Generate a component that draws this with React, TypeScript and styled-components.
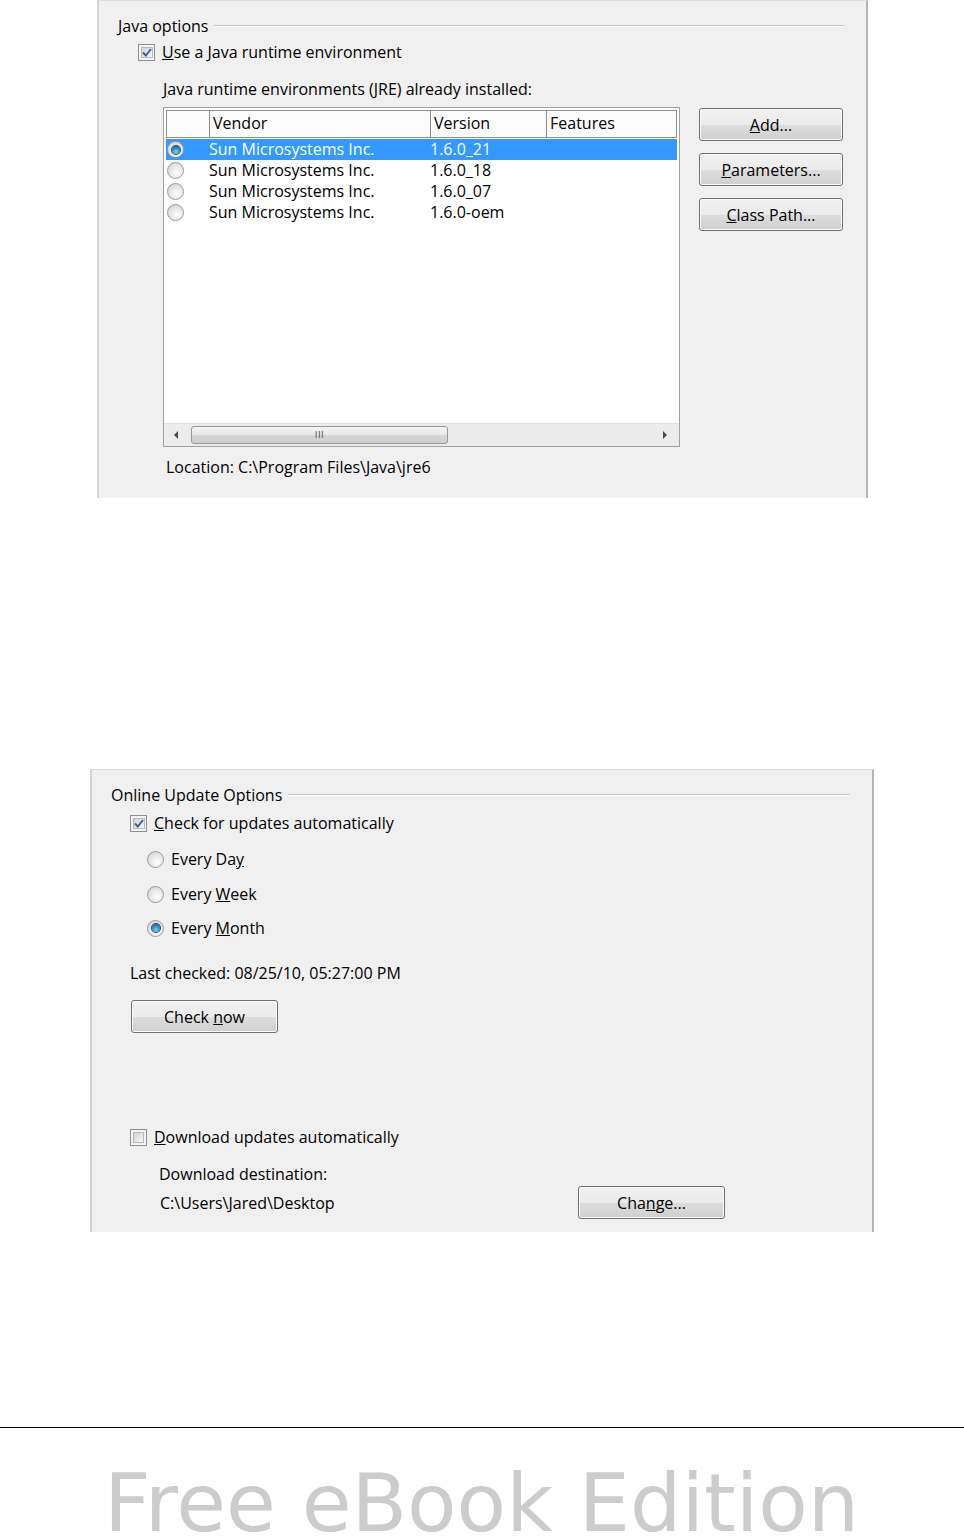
import styled, { createGlobalStyle } from "styled-components";

const GlobalStyle = createGlobalStyle`
  html, body {
    margin: 0;
    padding: 0;
    background: #ffffff;
  }
  body {
    font-family: "Open Sans", "Noto Sans", sans-serif;
    font-size: 16px;
    color: #000;
  }
`;

const Page = styled.div`
  width: 964px;
  height: 1539px;
  overflow: hidden;
  display: flex;
  flex-direction: column;
`;

const Panel = styled.section<{ $left: number; $width: number; $height: number; $top: number }>`
  box-sizing: border-box;
  flex-shrink: 0;
  margin-left: ${({ $left }) => $left}px;
  margin-top: ${({ $top }) => $top}px;
  width: ${({ $width }) => $width}px;
  height: ${({ $height }) => $height}px;
  background: #f0f0f0;
  border-top: 1px solid #dcdcdc;
  border-left: 2px solid #d4d4d4;
  border-right: 2px solid #b4b4b4;
  padding: 15px 22px 0 19px;
  display: flex;
  flex-direction: column;
`;

const GroupHeader = styled.div`
  display: flex;
  align-items: center;
  gap: 6px;
  height: 20px;
  line-height: 20px;
`;

const Rule = styled.div`
  flex: 1;
  border-top: 1px solid #c6c6c6;
  border-bottom: 1px solid #ffffff;
`;

const Row = styled.div<{ $indent: number; $top: number }>`
  display: flex;
  align-items: center;
  gap: 7px;
  height: 20px;
  line-height: 20px;
  flex-shrink: 0;
  margin-left: ${({ $indent }) => $indent}px;
  margin-top: ${({ $top }) => $top}px;
  white-space: nowrap;
`;

const Box = styled.span`
  box-sizing: border-box;
  width: 17px;
  height: 17px;
  border: 1px solid #8f8f8f;
  background: #f4f4f4;
  padding: 2px;
  display: inline-flex;
  flex-shrink: 0;
`;

const BoxInner = styled.span`
  flex: 1;
  border: 1px solid #b8b8b8;
  background: linear-gradient(135deg, #d2d2d2, #f8f8f8);
  display: flex;
  align-items: center;
  justify-content: center;
`;

const Circle = styled.span<{ $on?: boolean }>`
  box-sizing: border-box;
  width: 17px;
  height: 17px;
  border-radius: 50%;
  border: 1px solid #9a9a9a;
  background: radial-gradient(circle at 60% 65%, #ffffff 0%, #e4e4e4 55%, #c8c8c8 100%);
  display: inline-flex;
  align-items: center;
  justify-content: center;
  flex-shrink: 0;

  &::after {
    content: "";
    display: ${({ $on }) => ($on ? "block" : "none")};
    width: 8px;
    height: 8px;
    border-radius: 50%;
    background: radial-gradient(circle at 50% 70%, #7fd3f5 0%, #2b86b8 55%, #0f3e5e 100%);
    box-shadow: 0 0 0 1px #1e4d6d;
  }
`;

const Checkbox = ({ checked }: { checked?: boolean }) => (
  <Box>
    <BoxInner>
      {checked && (
        <svg width="10" height="9" viewBox="0 0 10 9">
          <path d="M1 4.5 L3.8 7.5 L9 1" fill="none" stroke="#3e5c94" strokeWidth="1.9" />
        </svg>
      )}
    </BoxInner>
  </Box>
);

const Button = styled.div<{ $width: number }>`
  box-sizing: border-box;
  width: ${({ $width }) => $width}px;
  height: 33px;
  border: 1px solid #707070;
  border-radius: 3px;
  box-shadow: inset 0 0 0 1px #fcfcfc;
  background: linear-gradient(#f2f2f2 0%, #ebebeb 50%, #dddddd 51%, #cfcfcf 100%);
  display: flex;
  align-items: center;
  justify-content: center;
  flex-shrink: 0;
`;

const Content = styled.div`
  display: flex;
  margin-top: 8px;
  margin-left: 45px;
  gap: 19px;
`;

const ListBox = styled.div`
  box-sizing: border-box;
  width: 517px;
  height: 340px;
  border: 1px solid #a0a0a0;
  background: #fff;
  padding: 2px;
  display: flex;
  flex-direction: column;
`;

const cols = "42px 221px 116px 1fr";

const HeaderRow = styled.div`
  box-sizing: border-box;
  display: grid;
  grid-template-columns: ${cols};
  height: 28px;
  border: 1px solid #8e8e8e;
  background: #fcfcfc;
`;

const HeaderCell = styled.div`
  border-left: 1px solid #8e8e8e;
  padding-left: 3px;
  line-height: 25px;
  &:first-child {
    border-left: none;
  }
`;

const Rows = styled.div`
  flex: 1;
  padding-top: 1px;
`;

const ListRow = styled.div<{ $selected?: boolean }>`
  display: grid;
  grid-template-columns: ${cols};
  height: 21px;
  line-height: 21px;
  background: ${({ $selected }) => ($selected ? "#3399ff" : "transparent")};
  color: ${({ $selected }) => ($selected ? "#fff" : "#000")};
  white-space: nowrap;
`;

const RadioCell = styled.div`
  display: flex;
  align-items: center;
  padding-left: 1px;
`;

const Cell = styled.div`
  padding-left: 1px;
`;

const ScrollBar = styled.div`
  height: 22px;
  margin: 0 -2px -2px;
  background: #ececec;
  border-top: 1px solid #e0e0e0;
  display: flex;
  align-items: center;
  padding: 0 12px 0 10px;
  gap: 13px;
`;

const Arrow = styled.span<{ $dir: "left" | "right" }>`
  width: 0;
  height: 0;
  border-top: 4px solid transparent;
  border-bottom: 4px solid transparent;
  ${({ $dir }) => ($dir === "left" ? "border-right: 4px solid #4a4a4a;" : "border-left: 4px solid #4a4a4a;")}
`;

const Thumb = styled.div`
  box-sizing: border-box;
  width: 257px;
  height: 18px;
  border: 1px solid #979797;
  border-radius: 3px;
  background: linear-gradient(#f3f3f3 0%, #e8e8e8 50%, #d6d6d6 51%, #cfcfcf 100%);
  display: flex;
  align-items: center;
  justify-content: center;
  font-size: 9px;
  letter-spacing: 0.5px;
  color: #555;
  font-family: "DejaVu Sans", sans-serif;
`;

const Spacer = styled.div`
  flex: 1;
`;

const ButtonColumn = styled.div`
  display: flex;
  flex-direction: column;
  gap: 12px;
  margin-top: 1px;
`;

const Footer = styled.footer`
  flex-shrink: 0;
  margin-top: 195px;
  border-top: 1px solid #000;
  display: flex;
  flex-direction: column;
`;

const Watermark = styled.div`
  margin-top: 35px;
  margin-left: 104px;
  font-family: "DejaVu Sans", sans-serif;
  font-size: 81px;
  line-height: 1;
  color: #cccccc;
  white-space: nowrap;
`;

const DestRow = styled.div`
  display: flex;
  align-items: center;
  justify-content: space-between;
  flex-shrink: 0;
  margin-left: 49px;
  width: 565px;
  margin-top: 2px;
`;

const jres = [
  { v: "1.6.0_21", selected: true },
  { v: "1.6.0_18" },
  { v: "1.6.0_07" },
  { v: "1.6.0-oem" },
];

export default function App() {
  return (
    <Page>
      <GlobalStyle />
      <Panel $left={97} $top={0} $width={771} $height={498}>
        <GroupHeader>
          Java options
          <Rule />
        </GroupHeader>
        <Row $indent={20} $top={6}>
          <Checkbox checked />
          <span>
            <u>U</u>se a Java runtime environment
          </span>
        </Row>
        <Row $indent={45} $top={17}>
          <span>
            <u>J</u>ava runtime environments (JRE) already installed:
          </span>
        </Row>
        <Content>
          <ListBox>
            <HeaderRow>
              <HeaderCell />
              <HeaderCell>Vendor</HeaderCell>
              <HeaderCell>Version</HeaderCell>
              <HeaderCell>Features</HeaderCell>
            </HeaderRow>
            <Rows>
              {jres.map((j) => (
                <ListRow key={j.v} $selected={j.selected}>
                  <RadioCell>
                    <Circle $on={j.selected} />
                  </RadioCell>
                  <Cell>Sun Microsystems Inc.</Cell>
                  <Cell>{j.v}</Cell>
                  <Cell />
                </ListRow>
              ))}
            </Rows>
            <ScrollBar>
              <Arrow $dir="left" />
              <Thumb>III</Thumb>
              <Spacer />
              <Arrow $dir="right" />
            </ScrollBar>
          </ListBox>
          <ButtonColumn>
            <Button $width={144}>
              <span>
                <u>A</u>dd...
              </span>
            </Button>
            <Button $width={144}>
              <span>
                <u>P</u>arameters...
              </span>
            </Button>
            <Button $width={144}>
              <span>
                <u>C</u>lass Path...
              </span>
            </Button>
          </ButtonColumn>
        </Content>
        <Row $indent={48} $top={10}>
          Location: C:\Program Files\Java\jre6
        </Row>
      </Panel>

      <Panel $left={90} $top={271} $width={784} $height={463}>
        <GroupHeader>
          Online Update Options
          <Rule />
        </GroupHeader>
        <Row $indent={19} $top={8}>
          <Checkbox checked />
          <span>
            <u>C</u>heck for updates automatically
          </span>
        </Row>
        <Row $indent={36} $top={16}>
          <Circle />
          <span>
            Every Da<u>y</u>
          </span>
        </Row>
        <Row $indent={36} $top={15}>
          <Circle />
          <span>
            Every <u>W</u>eek
          </span>
        </Row>
        <Row $indent={36} $top={14}>
          <Circle $on />
          <span>
            Every <u>M</u>onth
          </span>
        </Row>
        <Row $indent={19} $top={25}>
          Last checked: 08/25/10, 05:27:00 PM
        </Row>
        <Row $indent={20} $top={17} style={{ height: 33 }}>
          <Button $width={147}>
            <span>
              Check <u>n</u>ow
            </span>
          </Button>
        </Row>
        <Row $indent={19} $top={94}>
          <Checkbox />
          <span>
            <u>D</u>ownload updates automatically
          </span>
        </Row>
        <Row $indent={48} $top={17}>
          Download destination:
        </Row>
        <DestRow>
          <span>C:\Users\Jared\Desktop</span>
          <Button $width={147}>
            <span>
              Cha<u>n</u>ge...
            </span>
          </Button>
        </DestRow>
      </Panel>

      <Footer>
        <Watermark>Free eBook Edition</Watermark>
      </Footer>
    </Page>
  );
}
